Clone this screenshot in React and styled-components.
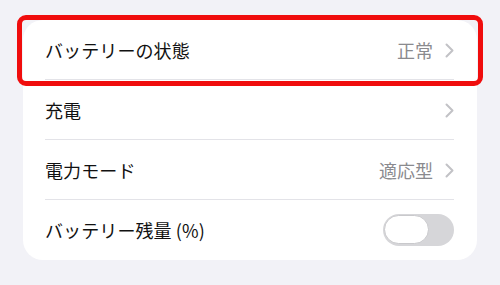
import React from "react";
import styled, { createGlobalStyle } from "styled-components";

const Global = createGlobalStyle`
  html, body { margin: 0; padding: 0; background: #f2f2f7; }
  body { font-family: "Noto Sans CJK JP", "Noto Sans", sans-serif; -webkit-font-smoothing: antialiased; }
`;

const Page = styled.div`
  width: 500px;
  height: 285px;
  box-sizing: border-box;
  padding: 20px 23px 0;
  background: #f2f2f7;
`;

const Card = styled.div`
  background: #fff;
  border-radius: 20px;
  display: flex;
  flex-direction: column;
`;

const Row = styled.div`
  position: relative;
  height: 60px;
  display: flex;
  align-items: center;
  padding: 0 23px 0 22px;
  &:not(:last-child)::after {
    content: "";
    position: absolute;
    left: 22px;
    right: 23px;
    bottom: 0;
    height: 1px;
    background: ${(p) => (p.$hideSep ? "transparent" : "#e3e3e8")};
  }
`;

const Label = styled.span`
  flex: 1;
  font-size: 18px;
  color: #111;
  letter-spacing: 0.1px;
`;

const Value = styled.span`
  font-size: 18px;
  color: #8a8a8e;
  margin-right: 12px;
`;

const Highlight = styled.div`
  position: absolute;
  left: -6px;
  right: -6px;
  top: -5px;
  bottom: -6px;
  border: 5px solid #f00d0d;
  border-radius: 9px;
  pointer-events: none;
`;

const Toggle = styled.div`
  width: 71px;
  height: 32px;
  border-radius: 16px;
  background: #d6d6d9;
  position: relative;
`;

const Knob = styled.div`
  position: absolute;
  left: 1px;
  top: 1px;
  width: 43px;
  height: 27px;
  border-radius: 15px;
  background: #fff;
  border: 1.5px solid #c9c9cc;
`;

const Chevron = () => (
  <svg width="9" height="15" viewBox="0 0 9 15">
    <path d="M1.5 1.5 L7.5 7.5 L1.5 13.5" fill="none" stroke="#c2c2c6" strokeWidth="2" strokeLinecap="round" strokeLinejoin="round" />
  </svg>
);

export default function App() {
  return (
    <>
      <Global />
      <Page>
        <Card>
          <Row>
            <Label>バッテリーの状態</Label>
            <Value>正常</Value>
            <Chevron />
            <Highlight />
          </Row>
          <Row>
            <Label>充電</Label>
            <Chevron />
          </Row>
          <Row>
            <Label>電力モード</Label>
            <Value>適応型</Value>
            <Chevron />
          </Row>
          <Row>
            <Label>バッテリー残量 (%)</Label>
            <Toggle>
              <Knob />
            </Toggle>
          </Row>
        </Card>
      </Page>
    </>
  );
}
